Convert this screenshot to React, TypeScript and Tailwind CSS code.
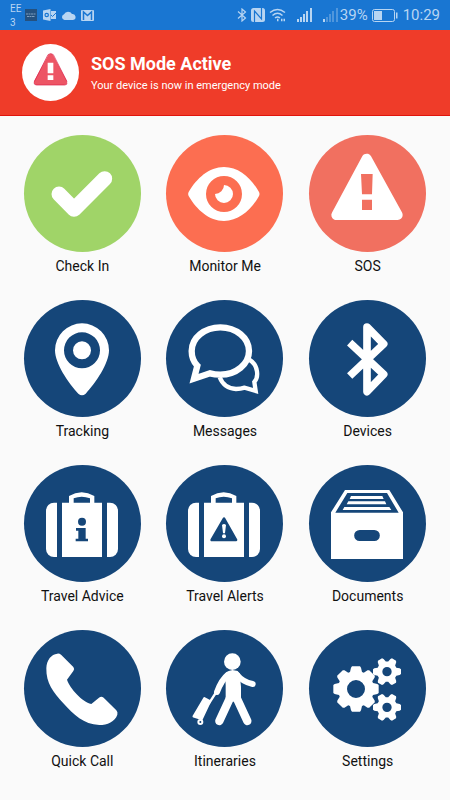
import type { ReactNode } from "react";

function gear(cx: number, cy: number, teeth: number, body: number, outer: number, base: number, tip: number) {
  const points: string[] = [];
  for (let i = 0; i < teeth; i++) {
    const a = (i * 2 * Math.PI) / teeth;
    const c = Math.cos(a);
    const s = Math.sin(a);
    const corners = [
      [body, -base],
      [outer - 4, -tip - 1],
      [outer, -tip + 2],
      [outer, tip - 2],
      [outer - 4, tip + 1],
      [body, base],
    ];
    for (const [r, t] of corners) {
      points.push(`${(cx + r * c - t * s).toFixed(1)} ${(cy + r * s + t * c).toFixed(1)}`);
    }
  }
  return `M${points.join("L")}Z`;
}

function hole(cx: number, cy: number, r: number) {
  return `M${cx - r} ${cy}a${r} ${r} 0 1 0 ${2 * r} 0a${r} ${r} 0 1 0 ${-2 * r} 0Z`;
}

const suitcase = (
  <g fill="#fff">
    <path d="M99 113H90A24 24 0 0 0 66 137V252A24 24 0 0 0 90 276H99Z" />
    <path d="M114 113H234V276H114Z" />
    <path d="M249 113H258A24 24 0 0 1 282 137V252A24 24 0 0 1 258 276H249Z" />
    <path d="M135 115V93Q173 71 211 93V115H198V100Q173 90 149 100V115Z" />
  </g>
);

const icons: Record<string, ReactNode> = {
  check: (
    <path d="M105 177L150 223L242 131" fill="none" stroke="#fff" strokeWidth="45" strokeLinecap="round" strokeLinejoin="round" />
  ),
  eye: (
    <g fill="#fff">
      <path
        fillRule="evenodd"
        d={
          "M68 171C92 130 129 96 174 96S256 130 279 171Q282 177 279 183C256 224 219 258 174 258S92 224 68 183Q65 177 68 171Z" +
          hole(174, 177, 54)
        }
      />
      <path d="M147 177A27 27 0 0 0 174 150A27 27 0 1 1 147 177Z" />
    </g>
  ),
  sos: (
    <g>
      <path d="M173 71L82 240H266Z" fill="#fff" stroke="#fff" strokeWidth="30" strokeLinejoin="round" />
      <path d="M156 117H191L189 178H159ZM159 194H189V225H159Z" fill="#f17060" />
    </g>
  ),
  pin: (
    <g fill="#fff">
      <path
        fillRule="evenodd"
        d={"M93 151A81 81 0 0 1 255 151C255 190 215 250 185 281Q174 291 163 281C133 250 93 190 93 151Z" + hole(174, 151, 54)}
      />
      <circle cx="174" cy="151" r="27" />
    </g>
  ),
  messages: (
    <g fill="none" stroke="#fff">
      <path d="M94 197C82 185 77 169 77 153A86 71 0 1 1 163 224Q146 224 132 220L84 236Z" strokeWidth="19" />
      <path d="M161 232C170 255 190 266 210 267Q224 267 236 263L269 273L265 246C278 232 278 196 250 179" strokeWidth="13" />
    </g>
  ),
  bluetooth: (
    <path
      d="M122 128L224 223L174 275V81L224 132L122 228"
      fill="none"
      stroke="#fff"
      strokeWidth="23"
      strokeLinejoin="round"
    />
  ),
  advice: (
    <g>
      {suitcase}
      <circle cx="174" cy="170" r="12" fill="#154679" />
      <path d="M156 189H185V221H192V229H155V221H163V197H156Z" fill="#154679" />
    </g>
  ),
  alerts: (
    <g>
      {suitcase}
      <path d="M174 161L137 225H210Z" fill="#154679" stroke="#154679" strokeWidth="8" strokeLinejoin="round" />
      <path d="M168 180Q174 174 180 180L177 205H171Z" fill="#fff" />
      <circle cx="174" cy="214" r="6" fill="#fff" />
    </g>
  ),
  documents: (
    <g fill="#fff">
      <path
        fillRule="evenodd"
        d="M108 75H241L282 142V282H66V142ZM115 84L79 143H269L234 84ZM152 195A16 16 0 0 0 152 228H196A16 16 0 0 0 196 195Z"
      />
      <path d="M126 93H220L224 102H122ZM118 109H228L232 118H113ZM106 126H241L247 135H101Z" />
    </g>
  ),
  phone: (
    <path
      transform="translate(-72 -45)"
      fill="#fff"
      d="M172 116Q178 115 184 120L220 156Q225 162 220 168L201 194C210 220 246 260 274 267L297 248Q304 243 311 248L349 286Q354 291 352 299C345 320 322 330 298 330C250 328 222 300 190 265C160 232 138 205 139 160C140 134 154 118 172 116Z"
    />
  ),
  traveller: (
    <g transform="translate(41 30)" stroke="#fff" strokeLinecap="round" strokeLinejoin="round" fill="none">
      <circle cx="158" cy="65" r="25" fill="#fff" stroke="none" />
      <path d="M136 101Q158 80 180 100L184 140V175L162 185L138 175V135Z" fill="#fff" stroke="none" />
      <path d="M145 104Q126 119 112 156" strokeWidth="18" />
      <path d="M170 102Q190 127 219 132" strokeWidth="18" />
      <path d="M151 174L119 243M171 174L203 243" strokeWidth="25" />
      <path d="M74 175L91 184L66 237L42 229Z" fill="#fff" strokeWidth="7" />
      <path d="M88 190L108 159" strokeWidth="7" />
      <circle cx="62" cy="246" r="6" strokeWidth="6" fill="#154679" />
    </g>
  ),
  gears: (
    <g fill="#fff" fillRule="evenodd">
      <path d={gear(141, 177, 8, 51, 68, 18, 14) + hole(141, 177, 27)} />
      <path d={gear(234, 125, 6, 28, 42, 12, 9) + hole(234, 125, 14)} />
      <path d={gear(234, 232, 6, 28, 42, 12, 9) + hole(234, 232, 14)} />
    </g>
  ),
};

const tiles = [
  { label: "Check In", icon: "check", color: "bg-[#a0d468]" },
  { label: "Monitor Me", icon: "eye", color: "bg-[#fc6e51]" },
  { label: "SOS", icon: "sos", color: "bg-[#f17060]" },
  { label: "Tracking", icon: "pin", color: "bg-[#154679]" },
  { label: "Messages", icon: "messages", color: "bg-[#154679]" },
  { label: "Devices", icon: "bluetooth", color: "bg-[#154679]" },
  { label: "Travel Advice", icon: "advice", color: "bg-[#154679]" },
  { label: "Travel Alerts", icon: "alerts", color: "bg-[#154679]" },
  { label: "Documents", icon: "documents", color: "bg-[#154679]" },
  { label: "Quick Call", icon: "phone", color: "bg-[#154679]" },
  { label: "Itineraries", icon: "traveller", color: "bg-[#154679]" },
  { label: "Settings", icon: "gears", color: "bg-[#154679]" },
];

function Signal({ dim }: { dim?: boolean }) {
  return (
    <svg viewBox="0 0 15 14" className="h-[14px] w-[15px]" fill="#b8d5f2">
      <path d="M0 11h2v3H0z" />
      <path d="M3 9h2v5H3zM6 6h2v8H6zM9 3h2v11H9zM13 0h2v14h-2z" opacity={dim ? 0.35 : 1} />
    </svg>
  );
}

function StatusBar() {
  return (
    <div className="flex h-[30px] items-center justify-between bg-[#1976d2] px-[10px] text-[#b8d5f2]">
      <div className="flex items-center">
        <div className="w-[15px] pt-[2px] text-[10px] leading-[14px]">
          <div>EE</div>
          <div>3</div>
        </div>
        <svg viewBox="0 0 12 12" className="size-3">
          <path d="M0 0h12v12H0z" fill="#25517f" />
          <path d="M1 5h10M2 7.500h8" stroke="#7f9fc0" strokeDasharray="2 .5" />
        </svg>
        <svg viewBox="0 0 13 12" className="ml-[6px] h-3 w-[13px]" fill="#b8d5f2">
          <path d="M0 1.500L7.500 0V12L0 10.500Z" />
          <path d="M8 2h5v8H8z" />
          <circle cx="3.700" cy="6" r="1.700" fill="none" stroke="#1976d2" strokeWidth="1.200" />
          <path d="M8 6l1.500 1.500L13 4" fill="none" stroke="#1976d2" />
        </svg>
        <svg viewBox="0 0 15 9" className="ml-[5px] h-[9px] w-[15px]" fill="#b8d5f2">
          <path d="M3.500 9A3 3 0 0 1 3 3.200A4.500 4.500 0 0 1 11 3A3 3 0 0 1 12 9Z" />
        </svg>
        <svg viewBox="0 0 13 11" className="ml-[5px] h-[11px] w-[13px]" fill="none">
          <rect width="13" height="11" rx="1" fill="#b8d5f2" />
          <path d="M2.500 10V2L6.500 5.500L10.500 2V10" stroke="#1976d2" strokeWidth="1.500" />
        </svg>
      </div>
      <div className="flex items-center text-[15px] leading-5">
        <svg viewBox="0 0 10 14" className="h-[14px] w-[10px]" fill="none" stroke="#b8d5f2" strokeWidth="1.200">
          <path d="M1 3.500L8.500 10L5 13V1L8.500 4L1 10.500" />
        </svg>
        <svg viewBox="0 0 14 14" className="ml-1 size-[14px]">
          <rect width="14" height="14" rx="2.500" fill="#b8d5f2" />
          <path d="M3.500 14V3L10.500 11V0" fill="none" stroke="#1976d2" strokeWidth="1.200" />
        </svg>
        <svg viewBox="0 0 17 14" className="ml-1 h-[14px] w-[17px]" fill="none" stroke="#b8d5f2" strokeWidth="1.500">
          <path d="M1 4.500Q8.500-1.500 16 4.500M3.500 7.500Q8.500 3 13.500 7.500M6 10Q8.500 8 11 10" />
          <path d="M8 12h2.500M12 12h4" strokeWidth="2.500" strokeDasharray="1.500 1" />
        </svg>
        <div className="ml-[11px] flex gap-[11px]">
          <Signal />
          <Signal dim />
        </div>
        <span className="ml-[2px]">39%</span>
        <svg viewBox="0 0 26 13" className="ml-1 h-[13px] w-[26px]" fill="#b8d5f2">
          <rect x=".5" y=".5" width="22" height="12" rx="2" fill="none" stroke="#b8d5f2" />
          <path d="M2 2h8v9H2zM24 3.500h1.500v6H24z" />
        </svg>
        <span className="ml-[5px]">10:29</span>
      </div>
    </div>
  );
}

export default function App() {
  return (
    <div className="min-h-screen bg-[#fafafa] font-['Roboto',sans-serif]">
      <StatusBar />
      <header className="flex items-center gap-3 border-b border-[#e0140c] bg-[#ef3c29] px-[22px] py-[14px] text-white">
        <div className="size-[57px] shrink-0 rounded-full bg-white">
          <svg viewBox="0 0 171 171" className="size-full" aria-hidden="true">
            <path d="M86 39L45 114H126Z" fill="#ed5565" stroke="#ed5565" strokeWidth="18" strokeLinejoin="round" />
            <path d="M36 116Q36 123 44 123H128Q136 123 135 116" fill="none" stroke="#da1b45" strokeWidth="2" />
            <path d="M78 32Q86 25 94 32L135 113M78 32L37 113" fill="none" stroke="#da1b45" strokeWidth="2" />
            <path d="M77 56H94V88H77ZM77 94H94V108H77Z" fill="#fff" />
          </svg>
        </div>
        <div className="pt-[2px]">
          <h1 className="text-[18px] leading-6 font-bold">SOS Mode Active</h1>
          <p className="text-[11px] leading-5">Your device is now in emergency mode</p>
        </div>
      </header>
      <main className="grid grid-cols-3 gap-y-6 px-[11px] pt-[19px] pb-6">
        {tiles.map((tile) => (
          <button key={tile.label} type="button" className="flex flex-col items-center gap-1 text-[14px] leading-5 text-[#111]">
            <span className={`block size-[117px] rounded-full ${tile.color}`}>
              <svg viewBox="0 0 351 351" className="size-full" aria-hidden="true">
                {icons[tile.icon]}
              </svg>
            </span>
            <span>{tile.label}</span>
          </button>
        ))}
      </main>
    </div>
  );
}
